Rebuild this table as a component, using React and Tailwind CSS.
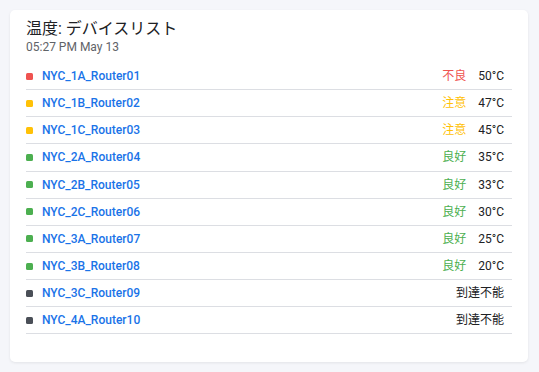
const devices = [
  { name: 'NYC_1A_Router01', level: 'bad', status: '不良', temp: '50°C' },
  { name: 'NYC_1B_Router02', level: 'warn', status: '注意', temp: '47°C' },
  { name: 'NYC_1C_Router03', level: 'warn', status: '注意', temp: '45°C' },
  { name: 'NYC_2A_Router04', level: 'good', status: '良好', temp: '35°C' },
  { name: 'NYC_2B_Router05', level: 'good', status: '良好', temp: '33°C' },
  { name: 'NYC_2C_Router06', level: 'good', status: '良好', temp: '30°C' },
  { name: 'NYC_3A_Router07', level: 'good', status: '良好', temp: '25°C' },
  { name: 'NYC_3B_Router08', level: 'good', status: '良好', temp: '20°C' },
  { name: 'NYC_3C_Router09', level: 'off', status: '到達不能', temp: null },
  { name: 'NYC_4A_Router10', level: 'off', status: '到達不能', temp: null },
];

const dotColor = {
  bad: 'bg-[#ef5350]',
  warn: 'bg-[#ffc107]',
  good: 'bg-[#4caf50]',
  off: 'bg-[#4a4f57]',
};

const textColor = {
  bad: 'text-[#ef5350]',
  warn: 'text-[#ffc107]',
  good: 'text-[#4caf50]',
  off: 'text-[#202124]',
};

export default function App() {
  return (
    <div
      className="w-[539px] h-[372px] bg-[#f5f6fa] p-[10px] pr-[11px]"
      style={{ fontFamily: 'Roboto, "Noto Sans CJK JP", sans-serif' }}
    >
      <div className="h-[352px] bg-white rounded-[5px] shadow-[0_1px_3px_rgba(0,0,0,0.08)] px-4 pt-[9px]">
        <h1 className="text-[16px] leading-[20px] text-[#202124] font-normal">温度: デバイスリスト</h1>
        <p className="text-[12px] leading-[16px] text-[#5f6368]">05:27 PM May 13</p>

        <ul className="mt-[8px]">
          {devices.map((d) => (
            <li
              key={d.name}
              className="h-[27.15px] flex items-center border-b border-[#dcdee3] pr-2 text-[12px]"
            >
              <span className={`w-[7px] h-[7px] rounded-[1.5px] ${dotColor[d.level]}`} />
              <span className="ml-[9px] font-medium text-[#1a73e8] flex-1">{d.name}</span>
              <span className={textColor[d.level]}>{d.status}</span>
              {d.temp && <span className="ml-3 text-[#202124]">{d.temp}</span>}
            </li>
          ))}
        </ul>
      </div>
    </div>
  );
}
